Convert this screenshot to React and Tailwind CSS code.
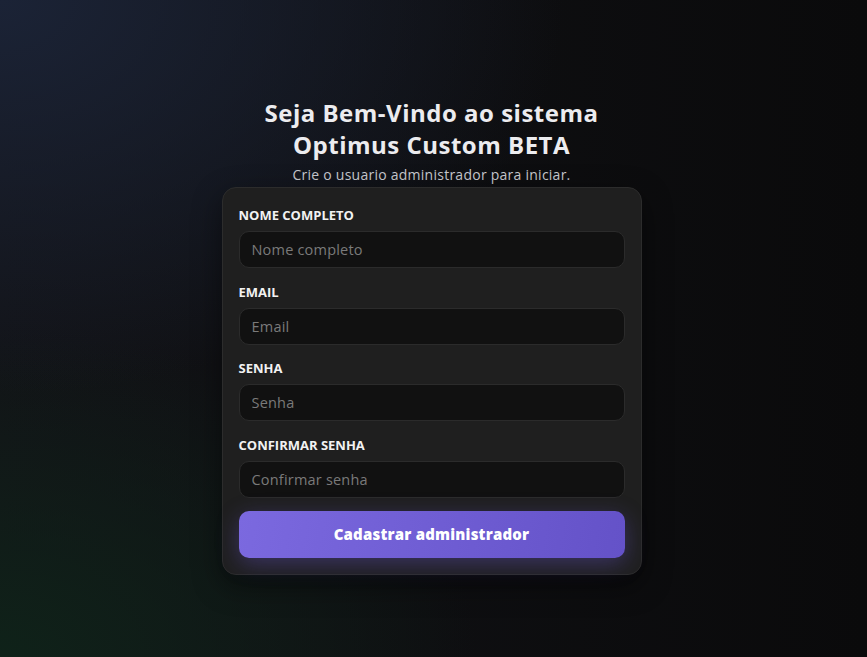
import React, { useState } from "react";

const fields = [
  { key: "nome", label: "NOME COMPLETO", placeholder: "Nome completo", type: "text" },
  { key: "email", label: "EMAIL", placeholder: "Email", type: "email" },
  { key: "senha", label: "SENHA", placeholder: "Senha", type: "password" },
  { key: "confirmar", label: "CONFIRMAR SENHA", placeholder: "Confirmar senha", type: "password" },
];

const App = () => {
  const [form, setForm] = useState({ nome: "", email: "", senha: "", confirmar: "" });

  const handleChange = (key, value) => {
    setForm((prev) => ({ ...prev, [key]: value }));
  };

  const handleSubmit = (e) => {
    e.preventDefault();
  };

  return (
    <div
      className="min-h-screen w-full flex flex-col items-center pt-[97px] pr-[4px] bg-[#0a0a0b] bg-[radial-gradient(ellipse_65%_60%_at_0%_0%,#1b2336_0%,transparent_100%),radial-gradient(ellipse_55%_50%_at_0%_100%,#0f2219_0%,transparent_100%),linear-gradient(to_right,#121317,#0a0a0b)]"
      style={{ fontFamily: '"Open Sans", "Noto Sans", sans-serif' }}
    >
      <div className="text-center">
        <h1 className="text-[24px] leading-[32px] font-bold text-[#ececef] tracking-[0.5px]">
          Seja Bem-Vindo ao sistema
          <br />
          Optimus Custom BETA
        </h1>
        <p className="text-[14px] leading-[20px] text-[#c9cad0] mt-[4px] tracking-[0.25px]">
          Crie o usuario administrador para iniciar.
        </p>
      </div>

      <form
        onSubmit={handleSubmit}
        className="mt-[2px] w-[420px] bg-[#1f1f1f] border border-[#2c2c2c] rounded-[14px] px-4 pt-[17px] pb-4 flex flex-col shadow-[0_10px_30px_rgba(0,0,0,0.45)]"
      >
        {fields.map((f) => (
          <div key={f.key} className="mb-[13.5px]">
            <label className="block text-[13px] leading-[20px] font-bold text-[#f2f2f2] mb-[6px]">
              {f.label}
            </label>
            <input
              type={f.type}
              placeholder={f.placeholder}
              value={form[f.key]}
              onChange={(e) => handleChange(f.key, e.target.value)}
              className="w-full h-[37px] px-3 bg-[#111111] border border-[#2b2b2b] rounded-[10px] text-[14.5px] tracking-[0.2px] text-[#e5e5e5] placeholder:text-[#7a7a7a] focus:outline-none"
            />
          </div>
        ))}

        <button
          type="submit"
          className="h-[47px] w-full rounded-[10px] bg-[linear-gradient(100deg,#7b69df,#6452c8)] text-white text-[15px] font-extrabold tracking-[0.2px] shadow-[0_6px_22px_rgba(110,90,220,0.35)] cursor-pointer"
        >
          Cadastrar administrador
        </button>
      </form>
    </div>
  );
};

export default App;
